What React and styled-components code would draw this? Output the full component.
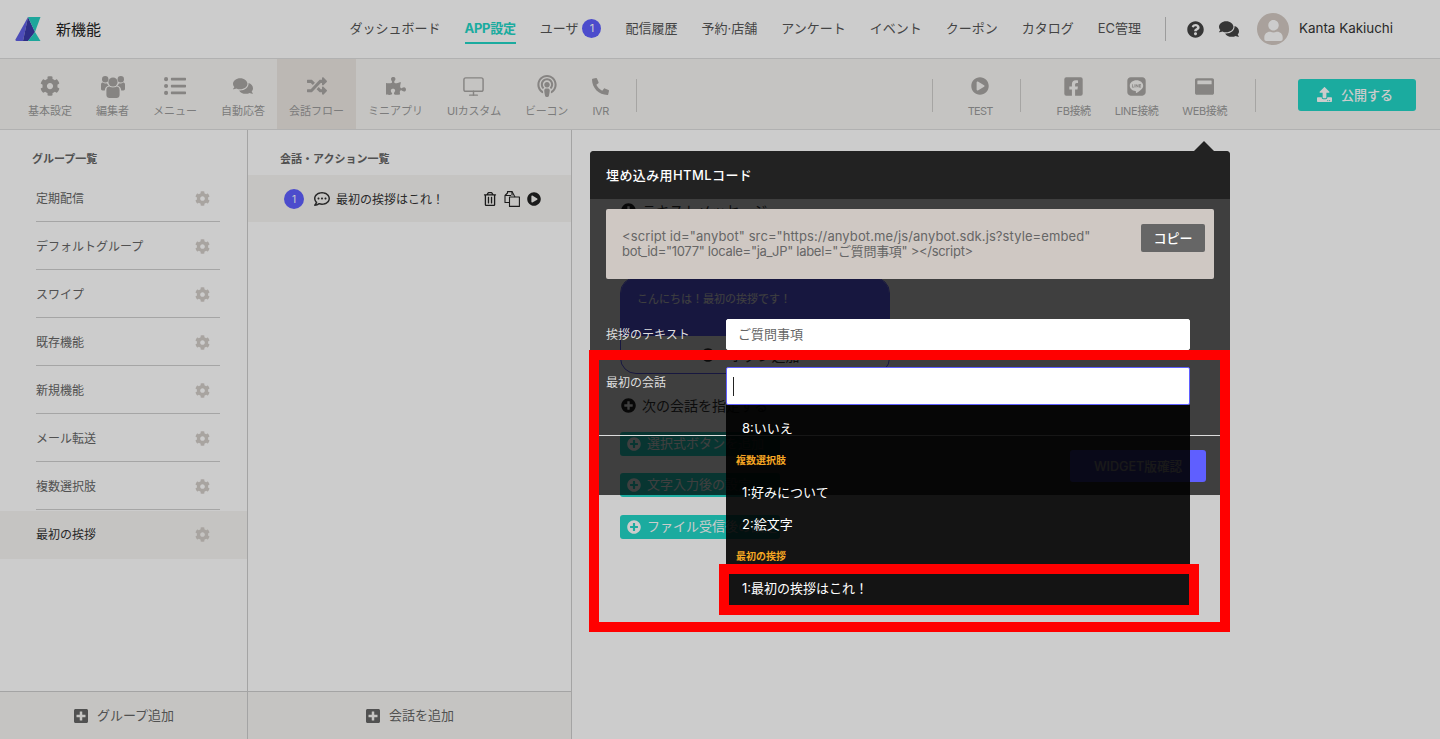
import React from 'react';
import styled, { createGlobalStyle } from 'styled-components';
import {
  FaCog, FaListUl, FaComments, FaRandom, FaPuzzlePiece, FaPodcast, FaPhone,
  FaPlayCircle, FaFacebookSquare, FaLine, FaWindowMaximize, FaQuestionCircle, FaUser,
  FaPlusSquare, FaPlusCircle, FaRegTrashAlt, FaRegCommentDots, FaUpload,
} from 'react-icons/fa';
import { Monitor } from 'lucide-react';

const Global = createGlobalStyle`
  html, body { margin: 0; padding: 0; background: #fff; }
  body { font-family: Inter, "Noto Sans CJK JP", sans-serif; color: #333; }
  * { box-sizing: border-box; }
`;

const Page = styled.div`
  position: relative; width: 1440px; height: 739px; overflow: hidden;
  display: flex; flex-direction: column; background: #fff;
`;
const Header = styled.header`
  height: 59px; flex: none; display: flex; align-items: center; padding: 0 47px 0 15px;
  border-bottom: 1px solid #dedede; background: #fff;
`;
const Brand = styled.div`
  display: flex; align-items: center; gap: 15px; font-size: 15px; color: #222; margin-right: auto; padding-bottom: 1px;
`;
const TopNav = styled.nav`display: flex; align-items: center; gap: 24px;`;
const TopLink = styled.a`
  position: relative; font-size: 13px; line-height: 22px; white-space: nowrap; display: flex; align-items: center; gap: 4px; padding-bottom: 2px;
  color: ${p => (p.$active ? '#22d6c7' : '#555')};
  font-weight: ${p => (p.$active ? 700 : 400)};
  letter-spacing: ${p => (p.$active ? '-0.3px' : '0')};
  ${p => p.$active && `&::after { content: ""; position: absolute; left: 0; right: 0; bottom: -3px; height: 2px; background: #22d6c7; }`}
`;
const CountBadge = styled.span`
  width: 19px; height: 19px; border-radius: 50%; background: #5f5fff; color: #fff;
  font-size: 11px; display: inline-flex; align-items: center; justify-content: center;
`;
const VLine = styled.span`
  width: 1px; flex: none; height: ${p => p.$h || 41}px; background: #c4c4c4;
`;
const UserArea = styled.div`display: flex; align-items: center; margin-left: 21px; color: #444;`;
const Avatar = styled.div`
  width: 32px; height: 32px; border-radius: 50%; background: #d4cac3; overflow: hidden;
  display: flex; align-items: flex-end; justify-content: center; color: #fff; margin: 0 10px 0 18px;
`;
const UserName = styled.span`font-size: 13.4px; color: #333; white-space: nowrap; padding-bottom: 2px;`;

const SubNav = styled.div`
  height: 71px; flex: none; display: flex; align-items: stretch; padding-left: 16px;
  background: #f7f6f3; border-bottom: 1px solid #dedede;
`;
const SubItem = styled.a`
  display: flex; flex-direction: column; align-items: center; padding: 0 12px;
  margin: 0 ${p => p.$mr ?? 0}px 0 ${p => p.$ml ?? 0}px;
  background: ${p => (p.$active ? '#ebe6e2' : 'transparent')};
  color: #9b9b9b; font-size: 11px; white-space: nowrap;
`;
const SubIcon = styled.span`
  height: 24px; margin-top: 15px; display: flex; align-items: center; justify-content: center; color: #a8a5a3; font-size: ${p => p.$size || 20}px;
`;
const SubLabel = styled.span`margin-top: 5px; line-height: 16px; letter-spacing: ${p => p.$ls ?? 0}px;`;
const SubDivider = styled.span`
  width: 1px; height: 33px; margin: 20px ${p => p.$r ?? 0}px 0 ${p => p.$l ?? 0}px; background: #d0cfcc; flex: none;
`;
const Spacer = styled.span`flex: 1;`;
const PublishButton = styled.button`
  align-self: flex-start; margin: 20px 24px 0 42px; width: 118px; height: 32px; border: 0; border-radius: 3px;
  background: #22d6c7; color: #fff; font: 500 13px Inter, "Noto Sans CJK JP", sans-serif; padding: 0 4px 2px 0;
  display: flex; align-items: center; justify-content: center; gap: 9px;
`;

const Content = styled.div`flex: 1; display: flex; min-height: 0;`;
const Column = styled.section`
  width: ${p => p.$w}px; flex: none; display: flex; flex-direction: column; border-right: 1px solid #cdcdcd; background: #fff;
`;
const ColumnTitle = styled.h3`
  margin: 0; height: 45px; padding: 21px 0 0 ${p => p.$x}px; font-size: 11px; line-height: 16px; font-weight: 700; color: #666;
`;
const Scroll = styled.div`flex: 1;`;
const GroupRow = styled.div`
  height: 48px; padding-left: 36px; background: ${p => (p.$active ? '#f7f6f3' : 'transparent')};
`;
const GroupInner = styled.div`
  height: 47px; width: 184px; display: flex; align-items: center; justify-content: space-between; padding: 0 10px 2px 0;
  font-size: 12px; color: ${p => (p.$active ? '#333' : '#666')};
  border-bottom: ${p => (p.$active ? 'none' : '1px solid #cfcfcf')};
  svg { color: #d3cdc9; font-size: 15px; margin-top: 2px; }
`;
const ActionRow = styled.div`
  height: 47px; background: #f7f6f3; display: flex; align-items: center; padding: 0 30px 0 36px; color: #333; font-size: 12px;
`;
const RowBadge = styled(CountBadge)`width: 20px; height: 20px; font-size: 10px; margin-right: 10px;`;
const RowIcons = styled.span`
  margin-left: auto; display: flex; align-items: center; gap: 7px; color: #222; font-size: 14px;
`;
const ColumnFooter = styled.div`
  height: 48px; flex: none; display: flex; align-items: center; justify-content: center; gap: 8px; padding-bottom: 3px;
  background: #f7f6f3; border-top: 1px solid #cdcdcd; color: #666; font-size: 13px;
  svg { font-size: 16px; color: #666; margin-top: 3px; }
`;

const Main = styled.main`flex: 1; padding: 70px 0 0 48px; background: #fff; display: flex; flex-direction: column; align-items: flex-start;`;
const AddLine = styled.div`
  display: flex; align-items: center; gap: 6px; font-size: 14px; color: #333; margin: ${p => p.$m || 0}; margin-left: 1px;
  svg { font-size: 15px; color: #222; }
`;
const Bubble = styled.div`
  margin-top: 57px; width: 270px; height: 97px; border-radius: 16px; border: 1px solid #5f5fff; overflow: hidden; display: flex; flex-direction: column;
`;
const BubbleText = styled.div`
  height: 58px; background: #5f5fff; color: #fff; font-size: 11px; padding: 12px 16px;
`;
const BubbleAction = styled.div`
  flex: 1; display: flex; align-items: center; justify-content: center; gap: 15px; font-size: 14px; color: #333; padding-right: 10px;
  svg { font-size: 14px; }
`;
const TealAdd = styled.button`
  width: 160px; height: 24px; border: 0; border-radius: 3px; background: #22d6c7; color: #fff; padding: 0 0 3px 7px;
  display: flex; align-items: center; gap: 6px; font: 13px Inter, "Noto Sans CJK JP", sans-serif; margin-top: ${p => p.$mt}px; white-space: nowrap;
  svg { font-size: 14px; margin-top: 3px; }
`;

const Scrim = styled.div`position: absolute; inset: 0; background: rgba(0,0,0,.2);`;
const Modal = styled.div`
  position: absolute; left: 590px; top: 151px; width: 640px; height: 344px; border-radius: 4px 4px 0 0;
  background: rgba(0,0,0,.69); color: #fff; display: flex; flex-direction: column;
`;
const Arrow = styled.span`
  position: absolute; right: 16px; top: -10px; width: 0; height: 0;
  border: 10px solid transparent; border-top: 0; border-bottom-color: #222;
`;
const ModalHead = styled.div`
  height: 48px; flex: none; background: #222; border-radius: 4px 4px 0 0; padding: 0 16px 2px; display: flex; align-items: center;
  font-size: 13px; font-weight: 500; letter-spacing: 0.4px;
`;
const ModalBody = styled.div`flex: 1; padding: 10px 16px 0; display: flex; flex-direction: column;`;
const CodeBox = styled.div`
  height: 70px; border-radius: 2px; background: #cfc8c3; color: #666; padding: 20px 9px 0 16px; display: flex; justify-content: space-between;
  font-size: 13px; line-height: 15px;
`;
const CodeLine = styled.span`display: block; white-space: nowrap; letter-spacing: ${p => p.$ls}px;`;
const CopyButton = styled.button`
  width: 64px; height: 28px; margin-top: -5px; border: 0; border-radius: 2px; background: #666; color: #fff; flex: none; padding: 0 0 2px;
  font: 500 13px Inter, "Noto Sans CJK JP", sans-serif;
`;
const FieldRow = styled.div`
  display: flex; align-items: ${p => p.$top ? 'flex-start' : 'center'}; margin-top: ${p => p.$mt}px; font-size: 12px; color: #ddd; position: relative;
`;
const FieldLabel = styled.label`width: 120px; flex: none; padding-bottom: 2px; ${p => p.$top && 'margin-top: 6px;'}`;
const FieldInput = styled.div`
  width: 464px; height: ${p => p.$h}px; border-radius: 2px; background: #fff; color: #666; font-size: 13px; display: flex; align-items: center;
  padding: 0 0 2px ${p => p.$pl || 11}px; border: 1px solid ${p => p.$focus ? '#5f5fff' : '#fff'};
`;
const Caret = styled.span`width: 1px; height: 19px; background: #222; margin-top: 2px;`;
const Dropdown = styled.div`
  position: absolute; left: 120px; top: 38px; width: 464px; height: 205px; background: rgba(0,0,0,.9); padding-top: 7px;
`;
const OptionRow = styled.div`
  height: 32px; display: flex; align-items: center; padding: 0 0 2px 16px; color: #fff; font-size: 13px;
`;
const OptionGroup = styled.div`
  height: 32px; display: flex; align-items: center; padding: 0 0 2px 10px; color: #f5a623; font-size: 10px; font-weight: 700;
`;
const ModalFoot = styled.div`
  height: 60px; margin: auto -16px 0; border-top: 1px solid #ddd; padding: 14px 24px 0 0; display: flex; justify-content: flex-end;
`;
const WidgetButton = styled.button`
  width: 136px; height: 32px; border: 0; border-radius: 3px; background: #5f5fff; color: #fff; padding: 0 0 2px;
  font: 500 12.6px Inter, "Noto Sans CJK JP", sans-serif;
`;
const RedFrame = styled.div`
  position: absolute; left: ${p => p.$x}px; top: ${p => p.$y}px; width: ${p => p.$w}px; height: ${p => p.$h}px;
  border: 10px solid #f00; pointer-events: none;
`;

const Logo = () => (
  <svg width="26" height="24" viewBox="0 0 26 24">
    <path d="M13 0 L8 24 H1.5 Q0 24 .5 22.6 Z" fill="#5f5fe6" />
    <path d="M13 0 L20 15 L13 24 H8 Z" fill="#3a3aa8" />
    <path d="M13 0 H25.5 L20 15 Z" fill="#25d0c2" />
    <path d="M13 24 L20 15 L25.5 24 Z" fill="#25d0c2" />
  </svg>
);

const UsersIcon = () => (
  <svg width="24" height="23" viewBox="0 0 24 23" fill="currentColor">
    <circle cx="12" cy="7" r="4.6" />
    <circle cx="4.2" cy="4.2" r="3.2" />
    <circle cx="19.8" cy="4.2" r="3.2" />
    <path d="M5.4 15 C5.4 12.4 7 11.6 8.6 11.6 C10 12.8 14 12.8 15.4 11.6 C17 11.6 18.6 12.4 18.6 15 V20 C18.6 22 17.2 23 15.6 23 H8.4 C6.8 23 5.4 22 5.4 20 Z" />
    <path d="M0 9.5 C0 8 1 7.6 2 7.6 C3 8.6 5 8.6 6 8.2 C6.6 9.6 7.2 10.2 7.8 10.8 C5.4 11.2 3.8 13 3.8 15.5 H1.6 C.6 15.5 0 14.8 0 13.8 Z" />
    <path d="M24 9.5 C24 8 23 7.6 22 7.6 C21 8.6 19 8.6 18 8.2 C17.4 9.6 16.8 10.2 16.2 10.8 C18.6 11.2 20.2 13 20.2 15.5 H22.4 C23.4 15.5 24 14.8 24 13.8 Z" />
  </svg>
);

const FilesIcon = () => (
  <svg width="16" height="16" viewBox="0 0 16 16" fill="none" stroke="currentColor" strokeWidth="1.1" strokeLinejoin="round">
    <path d="M7 4.5 H1 V11.5 H5.5" />
    <path d="M1 4.5 L3.5 2 V0.6 H8 V4.5" />
    <path d="M5.5 6 H11 L15.4 6 V15.4 H5.5 Z" />
    <path d="M11 6 L8 .6" />
  </svg>
);

const topLinks = ['配信履歴', '予約·店舗', 'アンケート', 'イベント', 'クーポン', 'カタログ', 'EC管理'];
const leftTabs = [
  { label: '基本設定', icon: <FaCog /> },
  { label: '編集者', icon: <UsersIcon /> },
  { label: 'メニュー', icon: <FaListUl />, size: 22 },
  { label: '自動応答', icon: <FaComments /> },
  { label: '会話フロー', icon: <FaRandom />, active: true },
  { label: 'ミニアプリ', icon: <FaPuzzlePiece /> },
  { label: 'UIカスタム', icon: <Monitor size={23} strokeWidth={1.5} />, ls: -0.2 },
  { label: 'ビーコン', icon: <FaPodcast />, size: 22, ls: -0.2 },
  { label: 'IVR', icon: <FaPhone style={{ transform: 'scaleX(-1)' }} />, size: 17, ls: -0.4 },
];
const groups = ['定期配信', 'デフォルトグループ', 'スワイプ', '既存機能', '新規機能', 'メール転送', '複数選択肢', '最初の挨拶'];

export default function App() {
  return (
    <Page>
      <Global />
      <Header>
        <Brand><Logo />新機能</Brand>
        <TopNav>
          <TopLink>ダッシュボード</TopLink>
          <TopLink $active>APP設定</TopLink>
          <TopLink>ユーザ<CountBadge>1</CountBadge></TopLink>
          {topLinks.map(t => <TopLink key={t}>{t}</TopLink>)}
          <VLine $h={24} />
        </TopNav>
        <UserArea>
          <FaQuestionCircle size={17} />
          <FaComments size={20} style={{ marginLeft: 15 }} />
          <Avatar><FaUser size={21} style={{ marginBottom: 4 }} /></Avatar>
          <UserName>Kanta Kakiuchi</UserName>
        </UserArea>
      </Header>
      <SubNav>
        {leftTabs.map(t => (
          <SubItem key={t.label} $active={t.active}><SubIcon $size={t.size}>{t.icon}</SubIcon><SubLabel $ls={t.ls}>{t.label}</SubLabel></SubItem>
        ))}
        <SubDivider $l={15} />
        <Spacer />
        <SubDivider />
        <SubItem $ml={23} $mr={15}><SubIcon $size={18}><FaPlayCircle /></SubIcon><SubLabel $ls={-0.75}>TEST</SubLabel></SubItem>
        <SubDivider $r={24} />
        <SubItem><SubIcon $size={21}><FaFacebookSquare /></SubIcon><SubLabel $ls={-0.4}>FB接続</SubLabel></SubItem>
        <SubItem><SubIcon $size={21}><FaLine /></SubIcon><SubLabel $ls={-0.4}>LINE接続</SubLabel></SubItem>
        <SubItem><SubIcon $size={19}><FaWindowMaximize /></SubIcon><SubLabel $ls={-0.4}>WEB接続</SubLabel></SubItem>
        <SubDivider $l={16} />
        <PublishButton><FaUpload size={15} />公開する</PublishButton>
      </SubNav>
      <Content>
        <Column $w={248}>
          <ColumnTitle $x={32}>グループ一覧</ColumnTitle>
          <Scroll>
            {groups.map((g, i) => {
              const active = i === groups.length - 1;
              return (
                <GroupRow key={g} $active={active}>
                  <GroupInner $active={active}>{g}<FaCog /></GroupInner>
                </GroupRow>
              );
            })}
          </Scroll>
          <ColumnFooter><FaPlusSquare />グループ追加</ColumnFooter>
        </Column>
        <Column $w={324}>
          <ColumnTitle $x={32}>会話・アクション一覧</ColumnTitle>
          <Scroll>
            <ActionRow>
              <RowBadge>1</RowBadge>
              <FaRegCommentDots size={16} style={{ marginRight: 6 }} />
              最初の挨拶はこれ！
              <RowIcons><FaRegTrashAlt /><FilesIcon /><FaPlayCircle /></RowIcons>
            </ActionRow>
          </Scroll>
          <ColumnFooter><FaPlusSquare />会話を追加</ColumnFooter>
        </Column>
        <Main>
          <AddLine><FaPlusCircle />テキストメッセージ</AddLine>
          <Bubble>
            <BubbleText>こんにちは！最初の挨拶です！</BubbleText>
            <BubbleAction><FaPlusCircle />ボタン追加</BubbleAction>
          </Bubble>
          <AddLine $m="21px 0 0 0"><FaPlusCircle />次の会話を指定する</AddLine>
          <TealAdd $mt={17}><FaPlusCircle />選択式ボタンを追加</TealAdd>
          <TealAdd $mt={17}><FaPlusCircle />文字入力後の設定</TealAdd>
          <TealAdd $mt={18}><FaPlusCircle />ファイル受信後の設定</TealAdd>
        </Main>
      </Content>
      <Scrim />
      <Modal>
        <Arrow />
        <ModalHead>埋め込み用HTMLコード</ModalHead>
        <ModalBody>
          <CodeBox>
            <span>
              <CodeLine $ls={0.1}>&lt;script id="anybot" src="https://anybot.me/js/anybot.sdk.js?style=embed"</CodeLine>
              <CodeLine $ls={-0.3}>bot_id="1077" locale="ja_JP" label="ご質問事項" &gt;&lt;/script&gt;</CodeLine>
            </span>
            <CopyButton>コピー</CopyButton>
          </CodeBox>
          <FieldRow $mt={40}>
            <FieldLabel>挨拶のテキスト</FieldLabel>
            <FieldInput $h={31}>ご質問事項</FieldInput>
          </FieldRow>
          <FieldRow $mt={17} $top>
            <FieldLabel $top>最初の会話</FieldLabel>
            <FieldInput $h={38} $focus $pl={6}><Caret /></FieldInput>
            <Dropdown>
              <OptionRow>8:いいえ</OptionRow>
              <OptionGroup>複数選択肢</OptionGroup>
              <OptionRow>1:好みについて</OptionRow>
              <OptionRow>2:絵文字</OptionRow>
              <OptionGroup>最初の挨拶</OptionGroup>
              <OptionRow>1:最初の挨拶はこれ！</OptionRow>
            </Dropdown>
          </FieldRow>
          <ModalFoot><WidgetButton>WIDGET版確認</WidgetButton></ModalFoot>
        </ModalBody>
      </Modal>
      <RedFrame $x={589} $y={350} $w={641} $h={282} />
      <RedFrame $x={719} $y={564} $w={480} $h={51} />
    </Page>
  );
}
